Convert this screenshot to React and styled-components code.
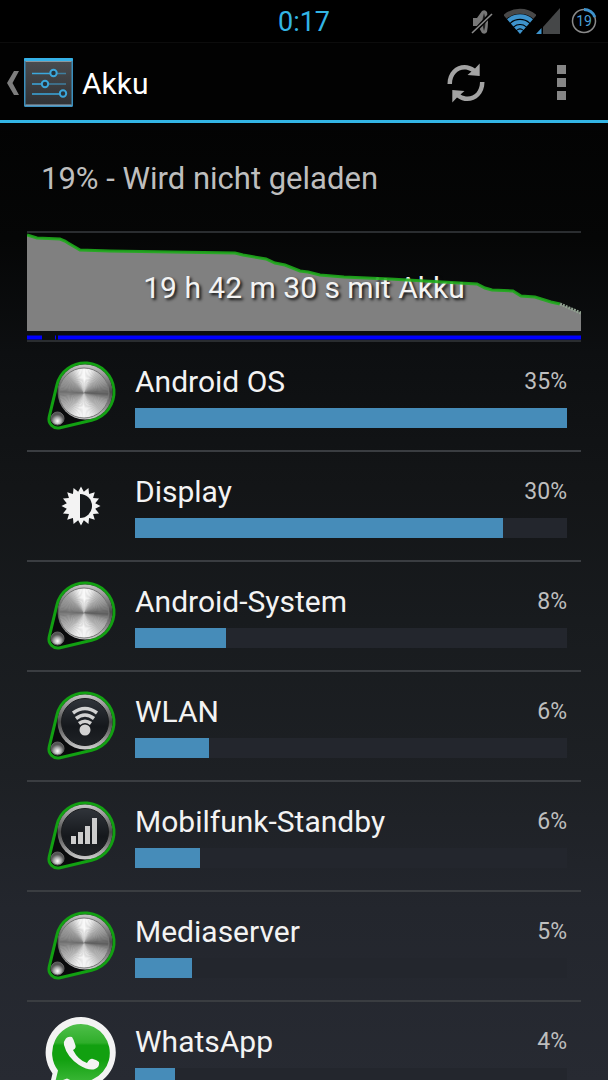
import React from 'react';
import styled, { createGlobalStyle } from 'styled-components';

const GlobalStyle = createGlobalStyle`
  * {
    box-sizing: border-box;
  }
  body {
    margin: 0;
    background-color: #000;
    color: #f3f3f3;
    font-family: Roboto, "Liberation Sans", sans-serif;
  }
  button {
    padding: 0;
    border: 0;
    background: none;
    color: inherit;
    font: inherit;
    text-align: left;
    cursor: pointer;
  }
  svg {
    display: block;
  }
`

const Screen = styled.div`
  display: flex;
  flex-direction: column;
  height: 100vh;
  overflow: hidden;
`

const StatusBar = styled.div`
  flex: none;
  display: grid;
  grid-template-columns: 1fr auto 1fr;
  align-items: center;
  height: 42px;
  background-color: #000;
`

const Clock = styled.time`
  grid-column: 2;
  padding-top: 2px;
  color: #33b5e5;
  font-size: 27px;
  line-height: 40px;
`

const StatusIcons = styled.div`
  display: grid;
  grid-template-columns: 35px 32px 34px 28px;
  justify-content: end;
  align-items: center;
  padding-right: 10px;
`

const ActionBar = styled.header`
  flex: none;
  display: flex;
  align-items: center;
  height: 81px;
  padding: 2px 17px 0 6px;
  border-top: 1px solid #0c0c0c;
  border-bottom: 3px solid #33b5e5;
  background-color: #020202;
`

const UpButton = styled.button`
  display: flex;
  align-items: center;
  gap: 5px;
`

const Title = styled.h1`
  flex: 1;
  margin: 0 0 0 9px;
  padding-top: 2px;
  color: #fff;
  font-size: 30px;
  font-weight: 400;
  line-height: 36px;
`

const IconButton = styled.button`
  display: flex;
  justify-content: center;
  width: ${props => props.$width}px;
`

const Content = styled.main`
  flex: 1;
  min-height: 0;
  overflow: hidden;
  padding: 0 27px;
  background: linear-gradient(#030303, #050606 12%, #0d0f11 24%, #131517 38%, #181b1e 52%, #1d2024 68%, #23262d 82%, #272a32);
`

const Summary = styled.p`
  display: flex;
  align-items: center;
  height: 110px;
  margin: 0;
  padding: 2px 14px 0;
  border-bottom: 2px solid #2a2d30;
  color: #bebebe;
  font-size: 31px;
`

const Chart = styled.button`
  display: grid;
  width: 100%;
  height: 109px;
  border-bottom: 2px solid #2a2d30;

  > * {
    grid-area: 1 / 1;
  }
`

const ChartLayer = styled.svg`
  width: 100%;
  height: 107px;
`

const ChartLabel = styled.span`
  padding-top: 37px;
  color: #f3f3f3;
  font-size: 30px;
  line-height: 36px;
  text-align: center;
  text-shadow: 2px 2px 3px #111;
`

const List = styled.ul`
  margin: 0;
  padding: 0;
  list-style: none;
`

const Row = styled.button`
  display: grid;
  grid-template-columns: 108px 1fr;
  align-items: center;
  width: 100%;
  padding: 22px 14px 22px 0;
  border-bottom: 2px solid #3a3d41;
`

const RowIcon = styled.span`
  display: flex;
  justify-content: center;
  height: 64px;
  align-items: center;
`

const RowHead = styled.span`
  display: flex;
  justify-content: space-between;
  margin-bottom: 8px;
  line-height: 36px;
`

const Name = styled.span`
  font-size: 30px;
`

const Percent = styled.span`
  color: #bebebe;
  font-size: 23px;
`

const Track = styled.span`
  display: block;
  height: 20px;
  background-color: #23262d;
`

const Fill = styled.span`
  display: block;
  height: 100%;
  background-color: #468cb9;
`

const MuteIcon = () => (
  <svg width="26" height="30" viewBox="0 0 26 30" fill="#777">
    <path d="M4 12h4l5-7q3-2 5 1q2 9 0 20q-2 3-5 1l-4-7H4z" />
    <path d="M15 7q3 9 0 18q-3-9 0-18z" fill="#222" />
    <path d="M3 28L22 8" stroke="#000" strokeWidth="4" />
    <path d="M3 27L23 8" stroke="#8a8a8a" strokeWidth="1.600" />
  </svg>
)

// each band is an arc around the tip at (17, 29)
const band = (r) => {
  const d = r * 0.66
  const y = 29 - r * 0.75
  return `M${17 - d} ${y}A${r} ${r} 0 0 1 ${17 + d} ${y}`
}

const WifiIcon = () => (
  <svg width="32" height="32" viewBox="1 0 32 32" fill="none" stroke="#3e93cc">
    <path d={band(22.8)} stroke="#484848" strokeWidth="5" />
    <path d={band(17.4)} strokeWidth="4.500" />
    <path d={band(12)} strokeWidth="4" />
    <path d={band(7.2)} strokeWidth="3.500" />
    <path d="M17 29L14 25.500Q17 23.500 20 25.500z" fill="#3e93cc" stroke="none" />
  </svg>
)

const SignalIcon = () => (
  <svg width="26" height="32" viewBox="0 0 26 32">
    <path d="M7 29V22L24 3V29z" fill="#454748" />
    <path d="M0 29L5.500 23V29z" fill="#3e93cc" />
  </svg>
)

const BatteryIcon = () => (
  <svg width="28" height="30" viewBox="0 0 28 30" fill="none">
    <circle cx="14" cy="15" r="11.500" stroke="#8a8a8a" strokeWidth="1.500" />
    <path d="M14 3.500A11.500 11.500 0 0 1 24.800 11" stroke="#3e93cc" strokeWidth="3" />
    <text x="14" y="20" fill="#4a9fd4" fontSize="14" textAnchor="middle">19</text>
  </svg>
)

const UpArrow = () => (
  <svg width="13" height="26" viewBox="0 0 13 26">
    <path d="M8 1H13L6.500 13L13 25H8L1 13z" fill="#7d7d7d" />
  </svg>
)

const SettingsIcon = () => (
  <svg width="49" height="49" viewBox="0 0 49 49">
    <defs>
      <linearGradient id="tile" x2="0" y2="1">
        <stop offset="0" stopColor="#4a4c4f" />
        <stop offset="1" stopColor="#303235" />
      </linearGradient>
    </defs>
    <rect width="49" height="49" rx="1.500" fill="#3a8fbd" />
    <rect width="49" height="3" rx="1" fill="#35b2e8" />
    <rect x="1.500" y="3" width="46" height="44" fill="url(#tile)" />
    <path d="M1.500 3.500H47.500" stroke="#8b979d" />
    <path d="M1.500 47H47.500" stroke="#9ab" />
    <g fill="none" stroke="#3ba7dc" strokeWidth="1.600">
      <path d="M8 15.500H26M8 26H18M8 36H36" />
      <path d="M33 15.500H42M24 26H42" stroke="#3f7fa0" />
      <g fill="#26323a" strokeWidth="2">
        <circle cx="29.500" cy="15" r="3.200" />
        <circle cx="21" cy="26" r="3.200" />
        <circle cx="39" cy="35.500" r="3.200" />
      </g>
    </g>
  </svg>
)

const RefreshIcon = () => (
  <svg width="48" height="48" viewBox="0 0 48 48" fill="#a3a3a3">
    <path d="M5.500 25C5.500 8 22 1 33 9.500L37.700 4.500V17L25.500 16L29.500 12.500C20 7 10 13 10 25z" />
    <path d="M42.500 23C42.500 40 26 47 15 38.500L10.300 43.500V31L22.500 32L18.500 35.500C28 41 38 35 38 23z" />
  </svg>
)

const MoreIcon = () => (
  <svg width="9" height="35" viewBox="0 0 9 35" fill="#868686">
    <rect width="9" height="9" />
    <rect y="13" width="9" height="9" />
    <rect y="26" width="9" height="9" />
  </svg>
)

// grey level of the brushed metal every 15 degrees, clockwise from the top
const shades = [250, 235, 195, 170, 150, 125, 95, 150, 175, 185, 215, 240, 245, 240, 215, 185, 170, 150, 115, 140, 150, 165, 200, 240]

const wedges = Array.from({ length: 96 }, (_, i) => {
  const a = Math.floor(i / 4)
  const t = (i % 4) / 4
  const level = Math.round(shades[a] * (1 - t) + shades[(a + 1) % 24] * t)
  const start = (i * 3.75 - 90) * Math.PI / 180
  const end = (i * 3.75 - 85.5) * Math.PI / 180
  const at = (angle) => `${39 + 25 * Math.cos(angle)} ${33 + 25 * Math.sin(angle)}`
  return { d: `M39 33L${at(start)}L${at(end)}z`, fill: `rgb(${level},${level},${level})` }
})

const Knob = ({ dark, children }) => (
  <svg width="72" height="72" viewBox="0 0 72 72">
    <defs>
      <linearGradient id="rim" x2="0" y2="1">
        <stop offset="0" stopColor="#c8c8c8" />
        <stop offset="0.500" stopColor="#4a4a4a" />
        <stop offset="0.700" stopColor="#777" />
        <stop offset="1" stopColor="#d0d0d0" />
      </linearGradient>
      <linearGradient id="face" x2="0" y2="1">
        <stop offset="0" stopColor="#30343a" />
        <stop offset="0.600" stopColor="#15181c" />
        <stop offset="1" stopColor="#202327" />
      </linearGradient>
      <radialGradient id="bead" cx="0.500" cy="0.700">
        <stop offset="0" stopColor="#fff" />
        <stop offset="0.550" stopColor="#aaa" />
        <stop offset="1" stopColor="#555" />
      </radialGradient>
    </defs>
    <path
      d="M46.700 60.200A29 29 0 1 0 11.800 25.300L4.200 56.900A9 9 0 0 0 15.100 67.800z"
      fill="#0a0b0c"
      stroke="#12a012"
      strokeWidth="3"
    />
    <circle cx="40" cy="32" r="27.500" fill="url(#rim)" />
    {dark
      ? <circle cx="40" cy="32" r="23.500" fill="url(#face)" stroke="#1a1c1e" />
      : <g>
          {wedges.map(wedge => <path key={wedge.d} {...wedge} />)}
          <circle cx="39" cy="33" r="25" fill="none" stroke="#777" />
        </g>}
    <circle cx="12.500" cy="58.500" r="6.500" fill="url(#bead)" stroke="#666" />
    {children}
  </svg>
)

const WlanKnob = () => (
  <Knob dark>
    <g fill="none" stroke="#d2d2d2" strokeWidth="3.500">
      <path d="M28 23Q40 14 52 23" />
      <path d="M31 28.500Q40 21.500 49 28.500" />
      <path d="M34 33.500Q40 29 46 33.500" />
    </g>
    <circle cx="40" cy="40" r="5.500" fill="#d2d2d2" />
  </Knob>
)

const CellKnob = () => (
  <Knob dark>
    <g fill="#cdcdcd">
      <rect x="26" y="36" width="5" height="8" />
      <rect x="33" y="32" width="5" height="12" />
      <rect x="40" y="26" width="5" height="18" />
      <rect x="47" y="18" width="5" height="26" />
    </g>
  </Knob>
)

const rays = Array.from({ length: 32 }, (_, i) => {
  const r = i % 2 ? 14.5 : 19.5
  const angle = i * Math.PI / 16
  return `${20 + r * Math.sin(angle)},${20 - r * Math.cos(angle)}`
}).join(' ')

const BrightnessIcon = () => (
  <svg width="40" height="40" viewBox="0 0 40 40">
    <polygon points={rays} fill="#f3f3f3" />
    <path d="M19 8A12 12 0 0 1 19 32z" fill="#15181b" />
  </svg>
)

const WhatsAppIcon = () => (
  <svg width="72" height="78" viewBox="0 0 72 78">
    <defs>
      <linearGradient id="bubble" x2="0" y2="1">
        <stop offset="0" stopColor="#4fbf4a" />
        <stop offset="0.320" stopColor="#2fae2a" />
        <stop offset="0.360" stopColor="#12a010" />
        <stop offset="0.600" stopColor="#12a010" />
        <stop offset="1" stopColor="#3cb838" />
      </linearGradient>
    </defs>
    <path d="M36 0A35.500 35.500 0 1 1 21 68L3 76L7.500 56.500A35.500 35.500 0 0 1 36 0z" fill="#f3f3f3" />
    <path d="M36 7A29 29 0 1 1 22 61.500L10 66L13 53.500A29 29 0 0 1 36 7z" fill="url(#bubble)" />
    <path
      d="M20 23Q22 19 27 20Q29 23 30 27Q32 31 28 33Q33 43 42 46Q45 41 48 42Q52 43 54 45Q55 50 50 52Q44 54 34 48Q22 40 19 28Q18 25 20 23z"
      fill="#f3f3f3"
    />
  </svg>
)

const level = '0,2 10,5 33,6 38,8 41,10 53,17 83,18 208,20 216,22 239,26 248,30 258,32 273,38 281,39 293,42 317,44 363,46 450,51 458,55 465,57 486,58 494,63 508,64 524,69 533,71'

const consumers = [
  { name: 'Android OS', percent: 35, fill: 100, icon: <Knob /> },
  { name: 'Display', percent: 30, fill: 85.2, icon: <BrightnessIcon /> },
  { name: 'Android-System', percent: 8, fill: 21, icon: <Knob /> },
  { name: 'WLAN', percent: 6, fill: 17.2, icon: <WlanKnob /> },
  { name: 'Mobilfunk-Standby', percent: 6, fill: 15, icon: <CellKnob /> },
  { name: 'Mediaserver', percent: 5, fill: 13.1, icon: <Knob /> },
  { name: 'WhatsApp', percent: 4, fill: 9.2, icon: <WhatsAppIcon /> },
]

const BatteryChart = () => (
  <Chart type="button">
    <ChartLayer viewBox="0 0 554 107" preserveAspectRatio="none">
      <polygon points={`0,98 ${level} 554,80 554,98`} fill="#808080" />
      <path d="M0 104.500H15M28 104.500H29M31 104.500H554" stroke="#0000ff" strokeWidth="4" />
    </ChartLayer>
    <ChartLabel>19 h 42 m 30 s mit Akku</ChartLabel>
    <ChartLayer viewBox="0 0 554 107" preserveAspectRatio="none" fill="none">
      <polyline points={level} stroke="#1fab1c" strokeOpacity="0.900" strokeWidth="3" />
      <path d="M533 71L554 80" stroke="#8fa08f" strokeWidth="3" strokeDasharray="2 1" />
    </ChartLayer>
  </Chart>
)

const Consumer = ({ name, percent, fill, icon }) => (
  <li>
    <Row type="button">
      <RowIcon>{icon}</RowIcon>
      <span>
        <RowHead>
          <Name>{name}</Name>
          <Percent>{percent}%</Percent>
        </RowHead>
        <Track>
          <Fill style={{ width: `${fill}%` }} />
        </Track>
      </span>
    </Row>
  </li>
)

const App = () => (
  <>
    <GlobalStyle />
    <Screen>
      <StatusBar>
        <Clock>0:17</Clock>
        <StatusIcons>
          <MuteIcon />
          <WifiIcon />
          <SignalIcon />
          <BatteryIcon />
        </StatusIcons>
      </StatusBar>
      <ActionBar>
        <UpButton type="button" aria-label="Zurück">
          <UpArrow />
          <SettingsIcon />
        </UpButton>
        <Title>Akku</Title>
        <IconButton type="button" $width={130} aria-label="Aktualisieren">
          <RefreshIcon />
        </IconButton>
        <IconButton type="button" $width={60} aria-label="Mehr">
          <MoreIcon />
        </IconButton>
      </ActionBar>
      <Content>
        <Summary>19% - Wird nicht geladen</Summary>
        <BatteryChart />
        <List>
          {consumers.map(item => <Consumer key={item.name} {...item} />)}
        </List>
      </Content>
    </Screen>
  </>
)

export default App;
